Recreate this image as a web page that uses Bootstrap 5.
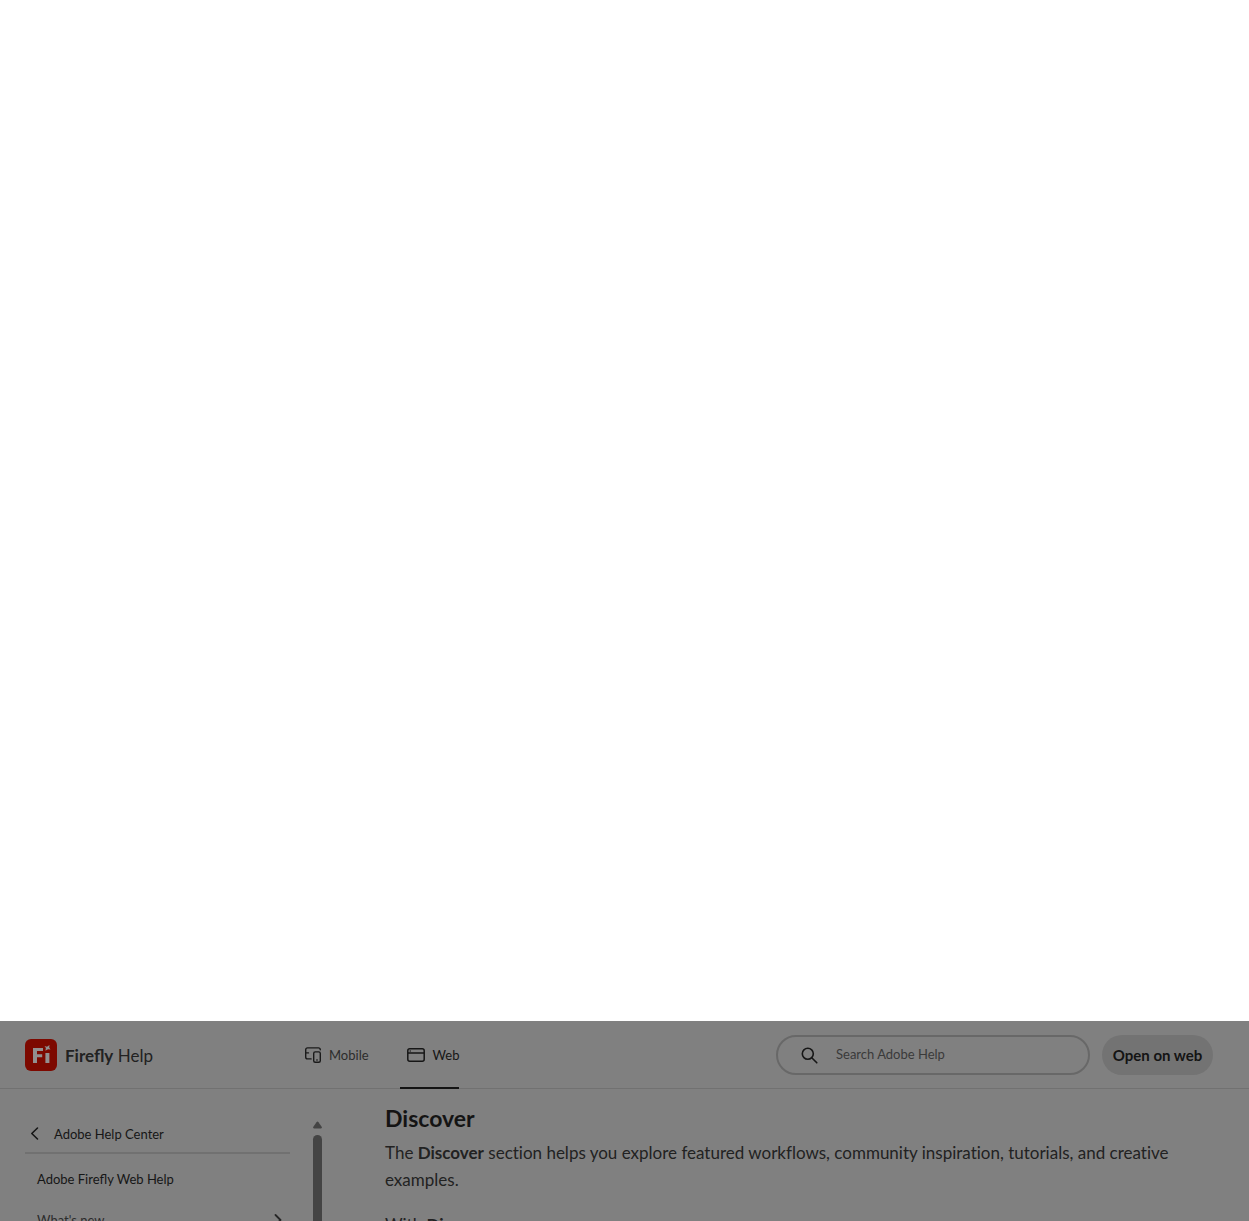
<!DOCTYPE html>
<html lang="en">
<head>
<meta charset="utf-8">
<meta name="viewport" content="width=device-width, initial-scale=1">
<title>Firefly Help</title>
<link rel="stylesheet" href="https://cdn.jsdelivr.net/npm/bootstrap@5.3.0/dist/css/bootstrap.min.css">
<style>
body{font-family:Lato,"Noto Sans",sans-serif;font-size:13px;line-height:20px;color:#161616;background:#fff}
a{color:inherit;text-decoration:none}
.help-pane{height:200px;background:#808080}
.help-bar{height:68px;border-bottom:1px solid #717171;padding-left:25px;padding-right:36px}
.brand-link{width:280px;font-size:17px;gap:8px;color:#222}
.brand-link span{padding-top:2px}
.tab-link{color:#2c2c2c;gap:8px}
.tab-web{margin-left:31px;padding:2px 0 0 7px;color:#161616;border-bottom:2px solid #141414;height:68px}
.search-pill{width:314px;height:40px;border:2px solid #686868;border-radius:20px;padding:0 24px 0 23px;gap:18px}
.search-pill svg{margin-top:2px}
.search-pill input{background:none;border:0;outline:0;padding:0 0 2px;color:#161616}
.search-pill input::placeholder{color:#3a3a3a;opacity:1}
.open-btn{width:111px;height:40px;border:0;border-radius:20px;background:#737373;color:#141414;font-size:15px;font-weight:700;padding:0;margin-left:12px}
.side-col{width:290px;padding:35px 0 0 25px}
.back-link{height:30px;gap:14px;padding-left:5px;border-bottom:2px solid #717171}
.side-item{padding:0 8px 0 12px}
.side-sub{color:#2c2c2c}
.side-list{padding-top:15px;gap:21px}
.side-track{width:9px;margin:32px 63px 0 23px;gap:5px}
.side-thumb{background:#444;border-radius:5px 5px 0 0}
.article{padding:14px 60px 0 0;font-size:17px;line-height:27px;color:#222;font-variant-ligatures:no-common-ligatures}
.article h2{font-size:23px;line-height:31px;font-weight:700;margin:0 0 5px;color:#141414}
.article p{margin:0 0 18px}
svg{flex:none}
</style>
<script src="https://cdn.jsdelivr.net/npm/bootstrap@5.3.0/dist/js/bootstrap.bundle.min.js"></script>
</head>
<body class="d-flex flex-column min-vh-100">
<div class="flex-grow-1"></div>
<div class="help-pane d-flex flex-column overflow-hidden">
  <header class="help-bar d-flex align-items-center flex-shrink-0">
    <a href="#" class="brand-link d-flex align-items-center">
      <svg width="32" height="32" viewBox="0 0 32 32" aria-hidden="true"><rect width="32" height="32" rx="6" fill="#7d0900"/><path fill="#929090" d="M8 9h10v3h-6v3.200h5.200v3H12V24H8zM20.400 14h4v10h-4zM19.500 7l2.500.7 2.500-1.700-.3 2.500 1.300 2-2.500-.3-2.600 1.600.5-2.800z"/></svg>
      <span><b>Firefly</b> Help</span>
    </a>
    <nav class="d-flex align-items-center" aria-label="Platform">
      <a href="#" class="tab-link d-flex align-items-center">
        <svg width="16" height="16" viewBox="0 0 16 16" fill="none" stroke="#1a1a1a" stroke-width="1.400" stroke-linecap="round" aria-hidden="true"><path d="M15.300 2.800c0-1.200-.7-1.900-1.900-1.900H2.600C1.400.9.700 1.600.7 2.800v7.200c0 1.200.7 1.900 1.900 1.900h3.500M1 5.900h2.500"/><rect x="8.700" y="4.900" width="6.600" height="10.400" rx="1.500"/><path d="M11.800 13h.4"/></svg>
        <span>Mobile</span>
      </a>
      <a href="#" class="tab-link tab-web d-flex align-items-center" aria-current="page">
        <svg width="18" height="14" viewBox="0 0 18 14" fill="none" stroke="#161616" stroke-width="1.500" aria-hidden="true"><rect x=".8" y=".8" width="16.400" height="12.400" rx="2"/><path d="M1 4.900h16M2.700 2.900h1"/></svg>
        <span>Web</span>
      </a>
    </nav>
    <label class="search-pill d-flex align-items-center ms-auto">
      <svg width="17" height="17" viewBox="0 0 17 17" fill="none" stroke="#161616" stroke-width="1.600" stroke-linecap="round" aria-hidden="true"><circle cx="6.800" cy="6.800" r="5.500"/><path d="M11 11l4.800 4.800"/></svg>
      <input type="search" class="flex-grow-1" placeholder="Search Adobe Help" aria-label="Search Adobe Help">
    </label>
    <button type="button" class="open-btn">Open on web</button>
  </header>
  <div class="d-flex flex-grow-1 overflow-hidden">
    <aside class="side-col flex-shrink-0">
      <a href="#" class="back-link d-flex align-items-start">
        <svg width="10" height="18" viewBox="0 0 10 18" fill="none" stroke="#161616" stroke-width="1.600" stroke-linecap="round" stroke-linejoin="round" aria-hidden="true"><path d="M7.500 4L1.800 9.500 7.500 15"/></svg>
        <span>Adobe Help Center</span>
      </a>
      <nav class="side-list d-flex flex-column" aria-label="Contents">
        <a href="#" class="side-item">Adobe Firefly Web Help</a>
        <a href="#" class="side-item side-sub d-flex justify-content-between align-items-center"><span>What's new</span>
          <svg width="8" height="12" viewBox="0 0 8 12" fill="none" stroke="#262626" stroke-width="1.800" stroke-linecap="round" stroke-linejoin="round" aria-hidden="true"><path d="M1.500 1l5 5-5 5"/></svg>
        </a>
      </nav>
    </aside>
    <div class="side-track d-flex flex-column flex-shrink-0" aria-hidden="true">
      <svg width="9" height="9" viewBox="0 0 9 9"><path fill="#444" d="M3.500 1.200q1-1.200 2 0L8.800 6q.5 1.200-.8 1.500H1Q-.3 7.200.2 6z"/></svg>
      <div class="side-thumb flex-grow-1"></div>
    </div>
    <main class="article flex-grow-1">
      <h2>Discover</h2>
      <p>The <b>Discover</b> section helps you explore featured workflows, community inspiration, tutorials, and creative examples.</p>
      <p>With <b>Discover</b></p>
    </main>
  </div>
</div>
</body>
</html>
